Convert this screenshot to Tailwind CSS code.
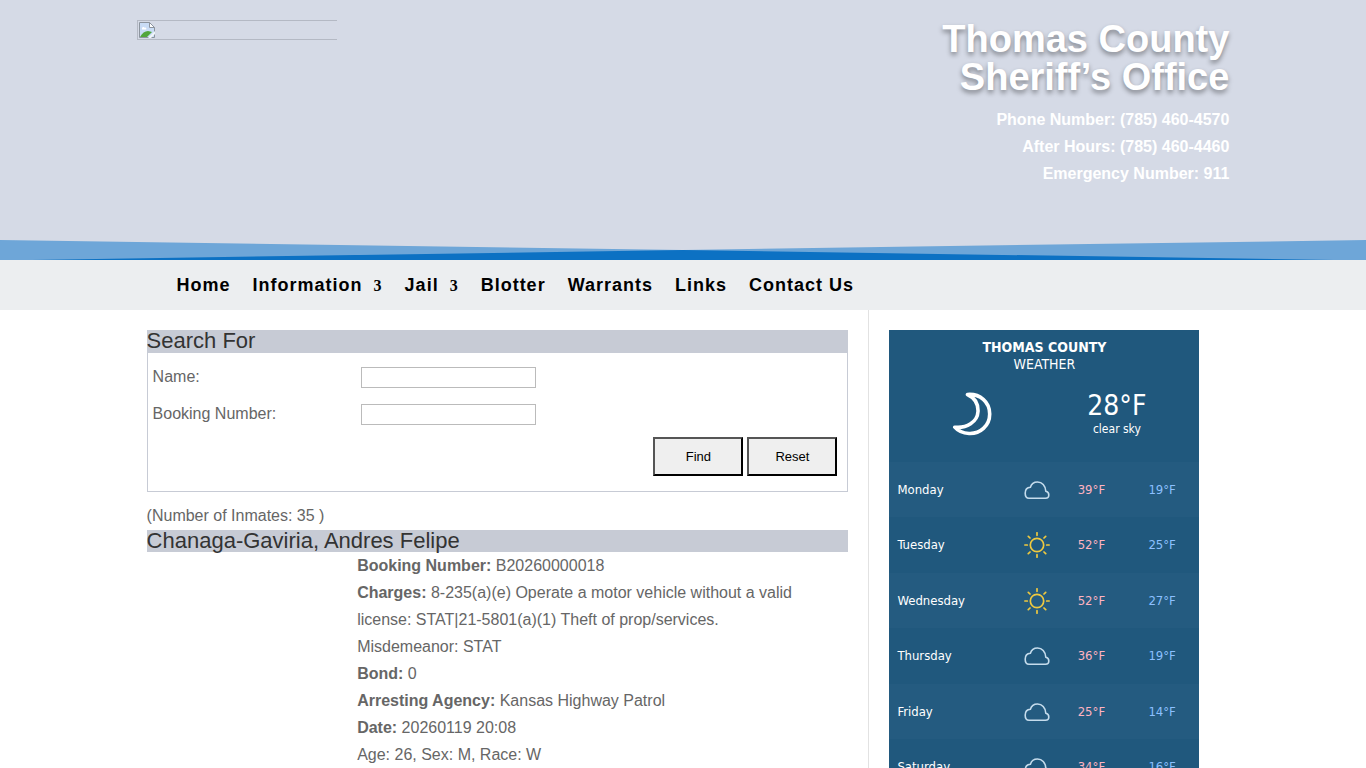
<!DOCTYPE html>
<html lang="en">
<head>
  <meta charset="UTF-8" />
  <meta name="viewport" content="width=device-width, initial-scale=1" />
  <title>Thomas County Sheriff's Office</title>
  <script src="https://cdn.jsdelivr.net/npm/@tailwindcss/browser@4"></script>
</head>
<body class="bg-white font-['Liberation_Sans',Arial,sans-serif] text-base leading-[27px] text-[#666]">

  <!-- Icon sprites -->
  <svg class="hidden">
    <symbol id="cloud" viewBox="0 0 26 20">
      <path d="M5 18.200h16.500c2 0 3.300-1.400 3.300-3.300 0-2-1.200-3.400-3-3.700C21.500 5.500 18 2 13.500 2 10 2 7.300 4 6.400 7.300 3 7.500 1.200 10 1.200 13.200c0 3 1.500 5 3.800 5Z" fill="none" stroke="#c5dcec" stroke-width="1.600" stroke-linejoin="round" />
    </symbol>
    <symbol id="sun" viewBox="0 0 26 26">
      <g fill="none" stroke="#efc93f" stroke-width="1.700" stroke-linecap="round">
        <circle cx="13" cy="13" r="6.700" />
        <path d="M13 .8v2.500M13 22.700v2.500M.8 13h2.500M22.700 13h2.500M4.300 4.300l1.700 1.700M20 20l1.700 1.700M4.300 21.700l1.700-1.700M20 6l1.700-1.700" />
      </g>
    </symbol>
  </svg>

  <header class="bg-[#d5dae6]">
    <div class="mx-auto flex h-60 w-4/5 items-start justify-between pt-5">
      <a href="#" aria-label="Home page" class="block h-5 w-[200px] border-y border-l border-[#b4b9c4] p-px">
        <svg class="size-4" viewBox="0 0 16 16">
          <path d="M.5.500h10l5 5v10H.500z" fill="#c9dcf5" stroke="#8c949e" />
          <path d="M10.500.500v5h5z" fill="#fff" stroke="#8c949e" />
          <path d="M3 6.500c0-1.500 2-2 2.500-.8 1.500-.6 2.500.8 1.500 1.800H3z" fill="#fff" />
          <path d="M1 15c2-4 5-6 8-6l4 1-5 5z" fill="#52a63c" />
          <path d="M9 16 16 9v3l-4 4z" fill="#f1f5fa" />
        </svg>
      </a>
      <div class="text-right font-bold text-white">
        <h1 class="mb-2.5 text-[38px] leading-[38px] text-shadow-[0_3px_5px_rgb(0_0_0/0.4)]">Thomas County<br />Sheriff’s Office</h1>
        <p>Phone Number: (785) 460-4570</p>
        <p>After Hours: (785) 460-4460</p>
        <p>Emergency Number: 911</p>
      </div>
    </div>
    <svg class="block h-5 w-full" viewBox="0 0 1366 20" preserveAspectRatio="none">
      <path d="M0 0 683 10 1366 0V20H0z" fill="#6ea6d8" />
      <path d="M0 20.500 683 10 1366 20.500z" fill="#0c71c3" />
    </svg>
  </header>

  <nav class="bg-[#eceef0]">
    <ul class="mx-auto flex h-[50px] w-4/5 items-center gap-[22px] pl-10 text-lg font-bold tracking-[1px] text-black">
      <li><a href="#">Home</a></li>
      <li><a href="#">Information <span class="mr-px ml-[5px] font-['Liberation_Serif',serif] text-base tracking-normal">3</span></a></li>
      <li><a href="#">Jail <span class="mr-px ml-[5px] font-['Liberation_Serif',serif] text-base tracking-normal">3</span></a></li>
      <li><a href="#">Blotter</a></li>
      <li><a href="#">Warrants</a></li>
      <li><a href="#">Links</a></li>
      <li><a href="#">Contact Us</a></li>
    </ul>
  </nav>

  <div class="mx-auto flex w-4/5 pl-2.5">
    <main class="min-w-0 flex-1 py-5 pr-5">
      <form class="border border-t-0 border-[#c7cbd5] pb-[15px]">
        <h2 class="-mx-px bg-[#c7cbd5] pb-px text-[22px] leading-[22px] text-[#333]">Search For</h2>
        <div class="mt-2.5 flex items-center pl-[5px]">
          <label for="name" class="w-52">Name:</label>
          <input id="name" type="text" class="mt-0.5 h-[21px] w-[175px] border border-[#bbb] bg-white px-1 text-sm" />
        </div>
        <div class="mt-2.5 flex items-center pl-[5px]">
          <label for="booking" class="w-52">Booking Number:</label>
          <input id="booking" type="text" class="mt-0.5 h-[21px] w-[175px] border border-[#bbb] bg-white px-1 text-sm" />
        </div>
        <div class="mt-2.5 flex justify-end gap-1 pr-2.5 text-[13px] leading-4 text-black">
          <button type="submit" class="h-[39px] w-[90px] border-2 border-t-[#555] border-r-black border-b-black border-l-[#555] bg-[#efefef]">Find</button>
          <button type="reset" class="h-[39px] w-[90px] border-2 border-t-[#555] border-r-black border-b-black border-l-[#555] bg-[#efefef]">Reset</button>
        </div>
      </form>

      <p class="mt-2.5 mb-px">(Number of Inmates: 35 )</p>

      <article>
        <h2 class="bg-[#c7cbd5] text-[22px] leading-[22px] text-[#333]">Chanaga-Gaviria, Andres Felipe</h2>
        <div class="ml-[30%] max-w-[450px]">
          <p><strong>Booking Number:</strong> B20260000018</p>
          <p><strong>Charges:</strong> 8-235(a)(e) Operate a motor vehicle without a valid license: STAT|21-5801(a)(1) Theft of prop/services. Misdemeanor: STAT</p>
          <p><strong>Bond:</strong> 0</p>
          <p><strong>Arresting Agency:</strong> Kansas Highway Patrol</p>
          <p><strong>Date:</strong> 20260119 20:08</p>
          <p>Age: 26, Sex: M, Race: W</p>
        </div>
      </article>
    </main>

    <aside class="w-[361px] shrink-0 border-l border-[#e2e2e2] py-5 pr-[30px] pl-5">
      <section class="bg-[#20587d] font-['DejaVu_Sans_Condensed','DejaVu_Sans',sans-serif] text-[13px] leading-4 text-white">
        <h3 class="pt-[9px] text-center text-sm leading-[17px]"><strong>THOMAS COUNTY</strong><br />WEATHER</h3>
        <div class="flex h-[89px] items-center px-2.5 pb-2">
          <div class="flex flex-1 justify-center">
            <svg class="h-11 w-10" viewBox="0 0 40 44">
              <path d="M15.500 2.500C28 1.500 37.700 10 37.700 22S28 42 17 41.500C11.500 41.200 6 39 2.800 35.200 14.500 36.500 25.500 30 26 19.500 26.300 11.500 22 5.500 15.500 2.500Z" fill="none" stroke="#fff" stroke-width="3.600" stroke-linejoin="round" />
            </svg>
          </div>
          <div class="flex-1 text-center">
            <div class="text-[28px] leading-[30px]">28°F</div>
            <div class="text-xs">clear sky</div>
          </div>
        </div>
        <table class="w-full table-fixed">
          <tbody>
            <tr class="h-14 odd:h-[55px] odd:bg-[#245b80]">
              <td class="w-[126px] pl-2">Monday</td>
              <td class="w-[45px]"><svg class="mr-2.5 ml-auto h-5 w-[26px]"><use href="#cloud" /></svg></td>
              <td class="w-[62px] text-center text-[#ffb3c0]">39°F</td>
              <td class="pl-[26px] text-[#8cc0ff]">19°F</td>
            </tr>
            <tr class="h-14 odd:h-[55px] odd:bg-[#245b80]">
              <td class="pl-2">Tuesday</td>
              <td><svg class="mr-2.5 ml-auto size-[26px]"><use href="#sun" /></svg></td>
              <td class="text-center text-[#ffb3c0]">52°F</td>
              <td class="pl-[26px] text-[#8cc0ff]">25°F</td>
            </tr>
            <tr class="h-14 odd:h-[55px] odd:bg-[#245b80]">
              <td class="pl-2">Wednesday</td>
              <td><svg class="mr-2.5 ml-auto size-[26px]"><use href="#sun" /></svg></td>
              <td class="text-center text-[#ffb3c0]">52°F</td>
              <td class="pl-[26px] text-[#8cc0ff]">27°F</td>
            </tr>
            <tr class="h-14 odd:h-[55px] odd:bg-[#245b80]">
              <td class="pl-2">Thursday</td>
              <td><svg class="mr-2.5 ml-auto h-5 w-[26px]"><use href="#cloud" /></svg></td>
              <td class="text-center text-[#ffb3c0]">36°F</td>
              <td class="pl-[26px] text-[#8cc0ff]">19°F</td>
            </tr>
            <tr class="h-14 odd:h-[55px] odd:bg-[#245b80]">
              <td class="pl-2">Friday</td>
              <td><svg class="mr-2.5 ml-auto h-5 w-[26px]"><use href="#cloud" /></svg></td>
              <td class="text-center text-[#ffb3c0]">25°F</td>
              <td class="pl-[26px] text-[#8cc0ff]">14°F</td>
            </tr>
            <tr class="h-14 odd:h-[55px] odd:bg-[#245b80]">
              <td class="pl-2">Saturday</td>
              <td><svg class="mr-2.5 ml-auto h-5 w-[26px]"><use href="#cloud" /></svg></td>
              <td class="text-center text-[#ffb3c0]">34°F</td>
              <td class="pl-[26px] text-[#8cc0ff]">16°F</td>
            </tr>
          </tbody>
        </table>
      </section>
    </aside>
  </div>

</body>
</html>
